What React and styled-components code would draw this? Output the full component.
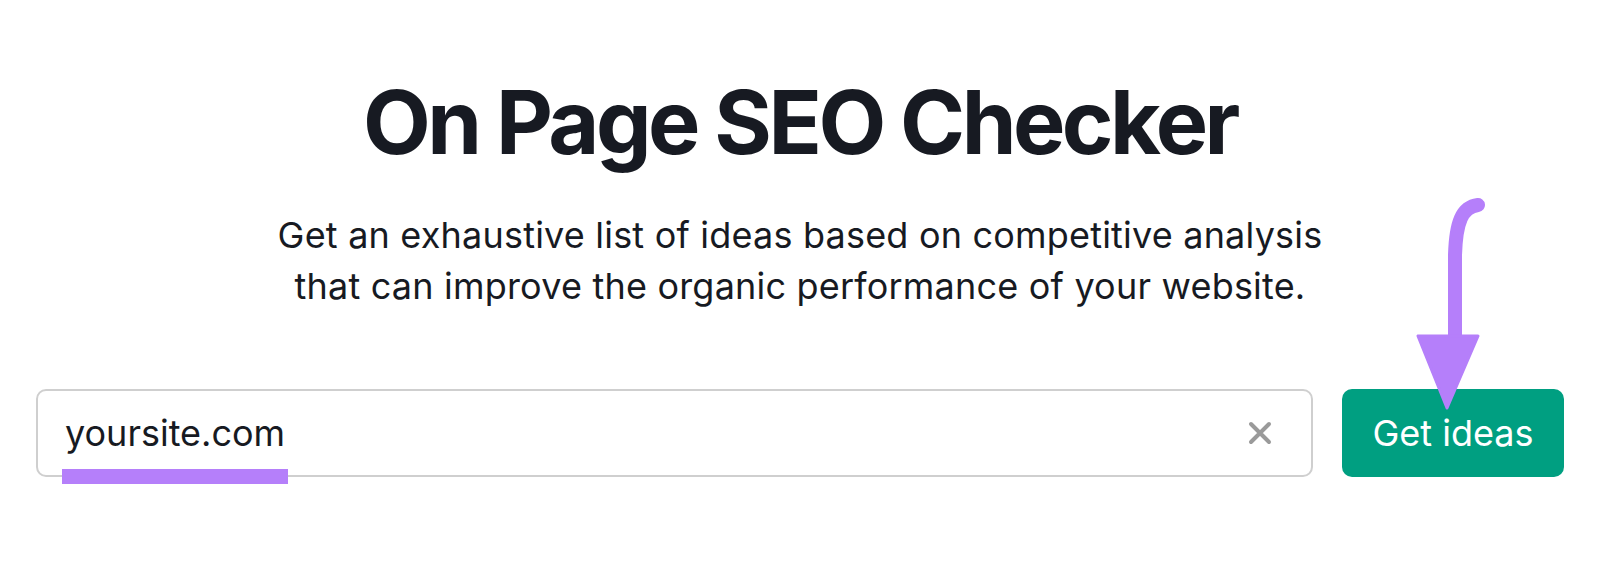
import React from 'react'
import styled, { createGlobalStyle } from 'styled-components'

const GlobalStyle = createGlobalStyle`
    html, body {
        margin: 0;
        padding: 0;
        background: #ffffff;
    }
    body {
        font-family: Inter, "Liberation Sans", Arial, sans-serif;
        color: #171a22;
    }
`

const Page = styled.div`
    position: relative;
    width: 1600px;
    height: 584px;
    display: flex;
    flex-direction: column;
    align-items: center;
    overflow: hidden;
    background: #ffffff;
`

const Title = styled.h1`
    margin: 78px 0 0;
    font-size: 88px;
    line-height: 88px;
    font-weight: 700;
    letter-spacing: -3.5px;
    color: #171a22;
`

const Subtitle = styled.p`
    margin: 44px 0 0;
    font-size: 36px;
    line-height: 51px;
    font-weight: 400;
    letter-spacing: 0.2px;
    text-align: center;
    color: #171a22;
`

const SearchRow = styled.div`
    box-sizing: border-box;
    width: 100%;
    margin-top: 77px;
    padding: 0 36px;
    display: flex;
    gap: 29px;
`

const InputBox = styled.div`
    box-sizing: border-box;
    flex: 1;
    height: 88px;
    border: 2px solid #cfcfcf;
    border-radius: 10px;
    display: flex;
    align-items: center;
    justify-content: space-between;
    padding: 0 39px 0 27px;
`

const Value = styled.span`
    position: relative;
    font-size: 36px;
    color: #171a22;
`

const Underline = styled.span`
    position: absolute;
    left: -3px;
    right: -3px;
    bottom: -29px;
    height: 15px;
    background: #b57ffa;
`

const ClearButton = styled.button`
    border: 0;
    padding: 0;
    background: transparent;
    display: flex;
    cursor: pointer;
`

const SubmitButton = styled.button`
    width: 222px;
    height: 88px;
    border: 0;
    border-radius: 10px;
    background: #009f81;
    color: #ffffff;
    font-family: inherit;
    font-size: 36px;
    font-weight: 400;
    cursor: pointer;
`

const Pointer = styled.svg`
    position: absolute;
    left: 0;
    top: 0;
    pointer-events: none;
`

const App = () => {
    return (
        <Page>
            <GlobalStyle />
            <Title>On Page SEO Checker</Title>
            <Subtitle>
                Get an exhaustive list of ideas based on competitive analysis
                <br />
                that can improve the organic performance of your website.
            </Subtitle>
            <SearchRow>
                <InputBox>
                    <Value>
                        yoursite.com
                        <Underline />
                    </Value>
                    <ClearButton aria-label="Clear">
                        <svg width="24" height="24" viewBox="0 0 24 24">
                            <path d="M3 3 L21 21 M21 3 L3 21" stroke="#9a9a9a" strokeWidth="4" strokeLinecap="round" />
                        </svg>
                    </ClearButton>
                </InputBox>
                <SubmitButton>Get ideas</SubmitButton>
            </SearchRow>
            <Pointer width="1600" height="584" viewBox="0 0 1600 584">
                <path d="M1478 205 C1462 207 1456 222 1455 255 L1455 340" fill="none" stroke="#b57ffa" strokeWidth="14" strokeLinecap="round" />
                <path d="M1418 336 L1478 336 L1447 408 Z" fill="#b57ffa" stroke="#b57ffa" strokeWidth="3" strokeLinejoin="round" />
            </Pointer>
        </Page>
    )
}

export default App
